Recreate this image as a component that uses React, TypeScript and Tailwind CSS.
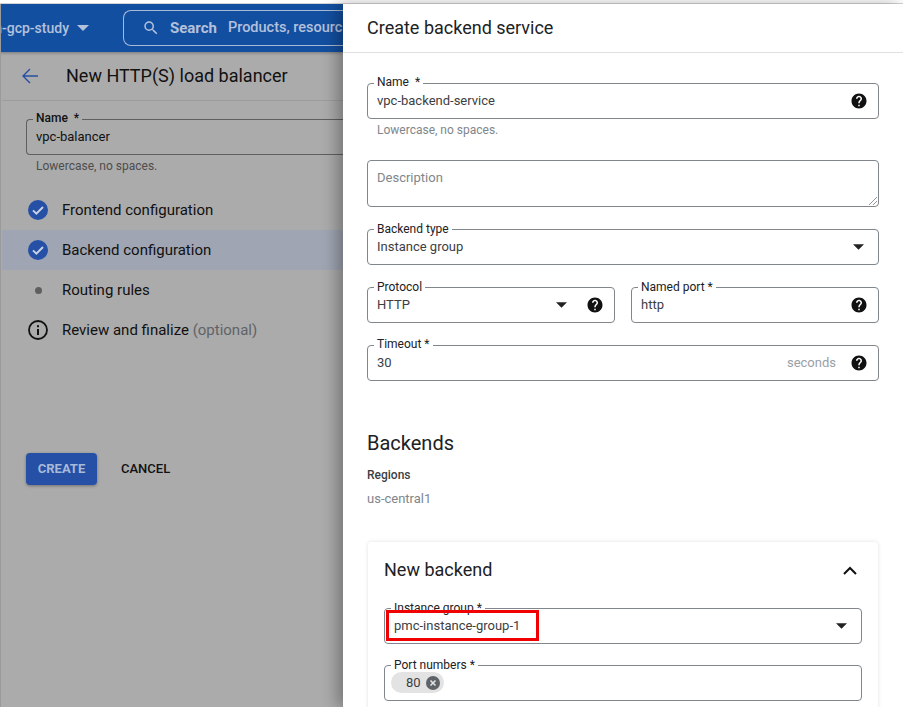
import React from "react";

const HelpIcon = () => (
  <svg viewBox="0 0 24 24" className="w-[18px] h-[18px] shrink-0" fill="#111">
    <path d="M12 2C6.48 2 2 6.48 2 12s4.48 10 10 10 10-4.48 10-10S17.52 2 12 2zm1 17h-2v-2h2v2zm2.07-7.75l-.9.92C13.45 12.9 13 13.5 13 15h-2v-.5c0-1.1.45-2.1 1.17-2.83l1.24-1.26c.37-.36.59-.86.59-1.41 0-1.1-.9-2-2-2s-2 .9-2 2H8c0-2.21 1.79-4 4-4s4 1.79 4 4c0 .88-.36 1.68-.93 2.25z" />
  </svg>
);

const Caret = () => (
  <svg viewBox="0 0 10 5" className="w-[11px] h-[6px] shrink-0" fill="#222">
    <path d="M0 0l5 5 5-5z" />
  </svg>
);

const CheckCircle = () => (
  <svg viewBox="0 0 20 20" className="w-5 h-5 shrink-0">
    <circle cx="10" cy="10" r="10" fill="#2650a5" />
    <path d="M5 10.4l3.4 3.3L15 7" fill="none" stroke="#c9d2e4" strokeWidth="2" />
  </svg>
);

interface FieldProps {
  label?: string;
  value?: string;
  raised?: boolean;
  className?: string;
  children?: React.ReactNode;
}

// outlined input with the label sitting in a notch on the top border
const Field: React.FC<FieldProps> = ({ label, value, raised, className, children }) => (
  <div className={`relative h-9 border border-[#80868b] rounded-[4px] flex items-center pl-[9px] pr-[10px] ${className ?? ""}`}>
    {label && (
      <span
        className={`absolute left-[6px] bg-white px-[3px] text-xs leading-[14px] text-[#202124] whitespace-pre ${
          raised ? "-top-[9px]" : "-top-[8px]"
        }`}
      >
        {label}
      </span>
    )}
    <span className="flex-1 text-[13px] text-[#3c4043]">{value}</span>
    {children}
  </div>
);

export default function App() {
  return (
    <div className="w-[903px] h-[707px] overflow-hidden flex flex-col bg-white font-['Roboto',sans-serif]">
      <div className="h-[3px] shrink-0 bg-white" />
      <div className="h-px shrink-0 bg-[#d4d4d4]" />
      <div className="flex flex-1 min-h-0">
        {/* Dimmed page behind the panel */}
        <div className="w-[343px] shrink-0 bg-[#ababab] flex flex-col overflow-hidden border-l border-[#9a9a9a] pl-px">
          <div className="h-12 shrink-0 bg-[#134fa0] flex items-center -ml-[2px] shadow-[0_1px_3px_rgba(0,0,0,0.3)] text-[#b3c1dc]">
            <span className="w-[123px] shrink-0 flex items-center justify-end gap-[8px] pr-[34px] text-sm whitespace-nowrap overflow-hidden">
              <span className="font-medium">n-gcp-study</span>
              <span className="border-x-[6px] border-t-[6px] border-x-transparent border-t-[#b3c1dc]" />
            </span>
            <div className="flex-1 h-9 border border-r-0 border-[#a9b9d6] rounded-l-lg flex items-center pl-[18px] gap-[10px] whitespace-nowrap overflow-hidden">
              <svg viewBox="0 0 24 24" className="w-[18px] h-[18px] shrink-0" fill="#b3c1dc">
                <path d="M15.5 14h-.79l-.28-.27A6.47 6.47 0 0 0 16 9.5 6.5 6.5 0 1 0 9.5 16c1.61 0 3.09-.59 4.23-1.57l.27.28v.79l5 4.99L20.49 19l-4.99-5zm-6 0C7.01 14 5 11.99 5 9.5S7.01 5 9.5 5 14 7.01 14 9.5 11.99 14 9.5 14z" />
              </svg>
              <span className="font-bold text-[15px] mr-px">Search</span>
              <span className="font-medium text-[14.5px]">Products, resourc</span>
            </div>
          </div>

          <div className="h-[49px] shrink-0 border-b border-[#9c9c9c] flex items-center pl-[20px] gap-[28px]">
            <svg viewBox="0 0 16 16" className="w-[16px] h-[16px] shrink-0" fill="none" stroke="#2650a5" strokeWidth="1.4">
              <path d="M16 8H1M8 1L1 8l7 7" />
            </svg>
            <span className="text-lg text-[#111] whitespace-nowrap">New HTTP(S) load balancer</span>
          </div>

          <div className="pt-[18px] pl-[24px]">
            <div className="relative h-9 border border-r-0 border-[#5f5f5f] rounded-l-[4px] flex items-center pl-[9px] text-[13px] text-[#111]">
              <span className="absolute -top-[9px] left-[6px] bg-[#ababab] px-[3px] text-xs leading-[14px] font-medium">Name&nbsp; *</span>
              <span>vpc-balancer</span>
            </div>
            <p className="pl-[10px] pt-[4px] text-xs leading-[14px] text-[#4d4d4d]">Lowercase, no spaces.</p>
          </div>

          <div className="mt-[17px] flex flex-col text-[15px] text-[#111]">
            <div className="h-10 flex items-center pl-[26px] gap-[14px]">
              <CheckCircle />
              <span>Frontend configuration</span>
            </div>
            <div className="h-10 flex items-center pl-[26px] gap-[14px] bg-[#9fa5b2]">
              <CheckCircle />
              <span>Backend configuration</span>
            </div>
            <div className="h-10 flex items-center pl-[26px] gap-[14px]">
              <span className="w-5 flex justify-center">
                <span className="w-[7px] h-[7px] rounded-full bg-[#5f5f5f]" />
              </span>
              <span>Routing rules</span>
            </div>
            <div className="h-10 flex items-center pl-[26px] gap-[14px]">
              <svg viewBox="0 0 20 20" className="w-5 h-5 shrink-0">
                <circle cx="10" cy="10" r="9" fill="none" stroke="#111" strokeWidth="1.8" />
                <rect x="9" y="9" width="2" height="6" fill="#111" />
                <rect x="9" y="5.2" width="2" height="2" fill="#111" />
              </svg>
              <span>
                Review and finalize <span className="text-[#5f6368]">(optional)</span>
              </span>
            </div>
          </div>

          <div className="mt-[103px] pl-[24px] flex items-center gap-[24px]">
            <button className="w-[71px] h-8 rounded-[4px] bg-[#2650a5] text-[#a9b9d8] text-[13px] font-bold shadow-[0_1px_3px_rgba(0,0,0,0.35)]">
              CREATE
            </button>
            <span className="text-[13px] font-medium text-[#111]">CANCEL</span>
          </div>
        </div>

        {/* Create backend service panel */}
        <div className="w-[560px] shrink-0 bg-white shadow-[-6px_0_14px_rgba(0,0,0,0.3)] z-10 flex flex-col overflow-hidden">
          <div className="h-[49px] shrink-0 border-b border-[#e0e0e0] flex items-center pl-[24px] text-lg text-[#202124]">
            Create backend service
          </div>
          <div className="pl-[24px] pr-[24px] pt-[30px] flex flex-col">
            <Field label="Name  *" value="vpc-backend-service" raised>
              <HelpIcon />
            </Field>
            <p className="pl-[10px] pt-[4px] text-xs leading-[14px] text-[#80868b]">Lowercase, no spaces.</p>

            <div className="relative mt-[23px] h-[47px] border border-[#80868b] rounded-[4px] pl-[9px] pt-[7px] text-[13px] text-[#80868b]">
              Description
              <svg viewBox="0 0 8 8" className="absolute right-px bottom-px w-2 h-2" stroke="#777" strokeWidth="0.8">
                <path d="M0 8L8 0M4 8L8 4" />
              </svg>
            </div>

            <Field label="Backend type" value="Instance group" className="mt-[22px] pr-[14px]">
              <Caret />
            </Field>

            <div className="mt-[22px] flex gap-[16px]">
              <Field label="Protocol" value="HTTP" className="w-[248px]">
                <Caret />
                <span className="w-[19px]" />
                <HelpIcon />
              </Field>
              <Field label="Named port *" value="http" className="w-[248px]">
                <HelpIcon />
              </Field>
            </div>

            <Field label="Timeout *" value="30" className="mt-[22px]" raised>
              <span className="text-[13px] text-[#9aa0a6] pr-[14px]">seconds</span>
              <HelpIcon />
            </Field>

            <h2 className="mt-[49px] text-xl leading-[26px] font-normal text-[#202124]">Backends</h2>
            <p className="mt-[12px] text-xs leading-[14px] font-medium text-[#3c4043]">Regions</p>
            <p className="mt-[9px] text-[13px] leading-[16px] text-[#80868b]">us-central1</p>

            <div className="mt-[35px] ml-px mr-px rounded-[4px] shadow-[0_0_4px_rgba(0,0,0,0.12)] px-[16px] h-[200px]">
              <div className="h-[55px] flex items-center justify-between pt-[1px] pr-[5px]">
                <span className="text-lg text-[#202124]">New backend</span>
                <svg viewBox="0 0 14 9" className="w-[14px] h-[9px]" fill="none" stroke="#111" strokeWidth="2">
                  <path d="M1 8l6-6 6 6" />
                </svg>
              </div>
              <div className="relative mt-[11px]">
                <Field label="Instance group *" value="pmc-instance-group-1" className="pr-[14px]">
                  <Caret />
                </Field>
                <div className="absolute left-[2px] top-[2px] w-[153px] h-[31px] border-[3px] border-[#f00000]" />
              </div>
              <Field label="Port numbers *" className="mt-[21px]">
                <span className="absolute left-[6px] top-[6px] h-[21px] w-[53px] rounded-full bg-[#e3e3e3] flex items-center pl-[15px] gap-[5px] text-[13px] text-[#3c4043]">
                  80
                  <svg viewBox="0 0 14 14" className="w-[14px] h-[14px]">
                    <circle cx="7" cy="7" r="7" fill="#5f6368" />
                    <path d="M4.5 4.5l5 5M9.5 4.5l-5 5" stroke="#e3e3e3" strokeWidth="1.6" />
                  </svg>
                </span>
              </Field>
            </div>
          </div>
        </div>
      </div>
    </div>
  );
}
